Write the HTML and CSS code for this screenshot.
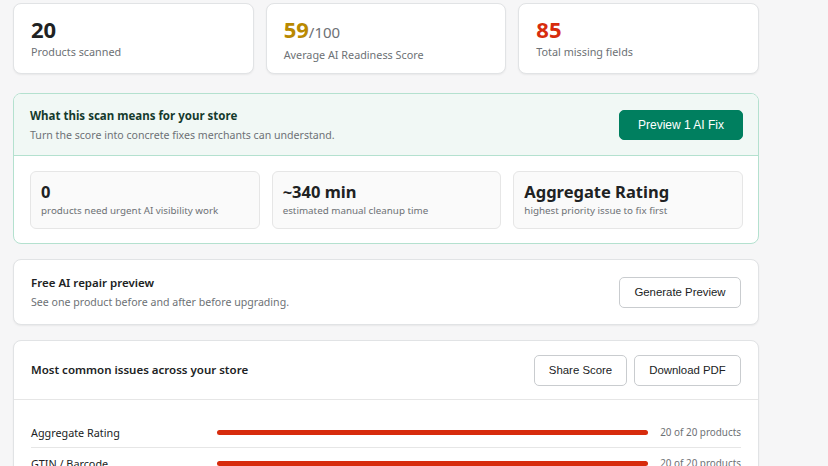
FILE: index.html
```html
<!DOCTYPE html>
<html lang="en">
<head>
    <meta charset="UTF-8">
    <meta name="viewport" content="width=device-width, initial-scale=1.0">
    <title>Scan Results</title>
    <link rel="stylesheet" href="styles.css">
</head>
<body>
    <div class="container">
        <div class="stats">
            <div class="card stat">
                <div class="stat-value">20</div>
                <div class="stat-label">Products scanned</div>
            </div>
            <div class="card stat">
                <div class="stat-value score">59<span class="out-of">/100</span></div>
                <div class="stat-label">Average AI Readiness Score</div>
            </div>
            <div class="card stat">
                <div class="stat-value missing">85</div>
                <div class="stat-label">Total missing fields</div>
            </div>
        </div>

        <div class="insight">
            <div class="insight-head">
                <div class="insight-text">
                    <h2>What this scan means for your store</h2>
                    <p>Turn the score into concrete fixes merchants can understand.</p>
                </div>
                <button class="btn btn-primary">Preview 1 AI Fix</button>
            </div>
            <div class="insight-body">
                <div class="metric">
                    <strong>0</strong>
                    <span>products need urgent AI visibility work</span>
                </div>
                <div class="metric">
                    <strong>~340 min</strong>
                    <span>estimated manual cleanup time</span>
                </div>
                <div class="metric">
                    <strong>Aggregate Rating</strong>
                    <span>highest priority issue to fix first</span>
                </div>
            </div>
        </div>

        <div class="card preview">
            <div>
                <h3>Free AI repair preview</h3>
                <p>See one product before and after before upgrading.</p>
            </div>
            <button class="btn">Generate Preview</button>
        </div>

        <div class="card issues">
            <div class="issues-head">
                <h3>Most common issues across your store</h3>
                <div class="actions">
                    <button class="btn">Share Score</button>
                    <button class="btn">Download PDF</button>
                </div>
            </div>
            <div class="issue-list" id="issueList"></div>
        </div>
    </div>

    <script>
        const issues = [
            { name: 'Aggregate Rating', count: 20 },
            { name: 'GTIN / Barcode', count: 20 },
            { name: 'Brand', count: 18 }
        ];
        const total = 20;

        const list = document.getElementById('issueList');
        issues.forEach(issue => {
            const row = document.createElement('div');
            row.className = 'issue';
            row.innerHTML = `
                <span class="issue-name">${issue.name}</span>
                <div class="bar"><div class="bar-fill" style="width: ${issue.count / total * 100}%"></div></div>
                <span class="issue-count">${issue.count} of ${total} products</span>
            `;
            list.appendChild(row);
        });
    </script>
</body>
</html>
```

FILE: styles.css
```css
body {
    margin: 0;
    padding: 3px 13px 0;
    font-family: "Noto Sans", "Open Sans", sans-serif;
    background-color: #f6f6f7;
    color: #202223;
}
.container {
    width: 746px;
}
h2, h3, p {
    margin: 0;
}
.card {
    background: #fff;
    border: 1px solid #e1e3e5;
    border-radius: 8px;
    box-shadow: 0 1px 2px rgba(0,0,0,0.06);
    box-sizing: border-box;
}
.stats {
    display: grid;
    grid-template-columns: repeat(3, 1fr);
    gap: 12px;
    margin-bottom: 19px;
}
.stat {
    height: 71px;
    padding: 11px 17px;
}
.stat-value {
    font-size: 22px;
    font-weight: 700;
    line-height: 28px;
}
.stat-value.score {
    color: #b98900;
}
.stat-value.missing {
    color: #d72c0d;
}
.out-of {
    font-size: 15px;
    font-weight: 400;
    color: #6d7175;
}
.stat-label {
    font-size: 10.8px;
    color: #6d7175;
    line-height: 18px;
}
.insight {
    border: 1px solid #b4e1cf;
    border-radius: 8px;
    background: #fff;
    overflow: hidden;
    margin-bottom: 15px;
}
.insight-head {
    display: flex;
    justify-content: space-between;
    align-items: center;
    height: 61px;
    padding: 0 15px 0 16px;
    background: #f1f8f5;
    border-bottom: 1px solid #b4e1cf;
}
.insight-text {
    padding-top: 2px;
}
.insight-head h2 {
    font-size: 11.5px;
    font-weight: 700;
    color: #153a2d;
    line-height: 18px;
}
.insight-head p,
.preview p {
    font-size: 10.6px;
    color: #6d7175;
    line-height: 18px;
    margin-top: 1px;
}
.insight-body {
    display: grid;
    grid-template-columns: repeat(3, 1fr);
    gap: 12px;
    padding: 15px 15px 14px 16px;
}
.metric {
    display: flex;
    flex-direction: column;
    height: 58px;
    box-sizing: border-box;
    padding: 9px 10px;
    background: #fafafa;
    border: 1px solid #e6e6e6;
    border-radius: 6px;
}
.metric strong {
    font-size: 16.5px;
    line-height: 22px;
}
.metric span {
    font-size: 9.8px;
    color: #6d7175;
    line-height: 16px;
}
.btn {
    font-family: "Liberation Sans", Arial, sans-serif;
    font-size: 11.4px;
    color: #202223;
    background: #fff;
    border: 1px solid #c9cccf;
    border-radius: 5px;
    height: 31px;
    padding: 0;
    white-space: nowrap;
    cursor: pointer;
}
.btn-primary {
    font-size: 12px;
    background: #007f5f;
    border-color: #007f5f;
    color: #fff;
    width: 124px;
    height: 30px;
}
.preview {
    display: flex;
    justify-content: space-between;
    align-items: center;
    height: 66px;
    padding: 0 17px 0 17px;
    margin-bottom: 15px;
}
.preview h3,
.issues-head h3 {
    font-size: 11.5px;
    font-weight: 600;
    line-height: 18px;
}
.preview .btn {
    width: 122px;
}
.issues {
    border-bottom-left-radius: 0;
    border-bottom-right-radius: 0;
}
.issues-head {
    display: flex;
    justify-content: space-between;
    align-items: center;
    height: 58px;
    padding: 0 17px 0 17px;
    border-bottom: 1px solid #e6e6e6;
}
.actions {
    display: flex;
    gap: 7px;
}
.actions .btn:first-child {
    width: 93px;
}
.actions .btn:last-child {
    width: 107px;
}
.issue-list {
    padding: 17px 17px 0;
}
.issue {
    display: grid;
    grid-template-columns: 186px 1fr 81px;
    align-items: center;
    height: 30px;
    border-bottom: 1px solid #e6e6e6;
}
.issue-name {
    font-size: 10.8px;
}
.bar {
    height: 5px;
    margin-right: 12px;
}
.bar-fill {
    height: 100%;
    background: #d72c0d;
    border-radius: 3px;
}
.issue-count {
    font-size: 9.9px;
    color: #6d7175;
    text-align: right;
}
```
